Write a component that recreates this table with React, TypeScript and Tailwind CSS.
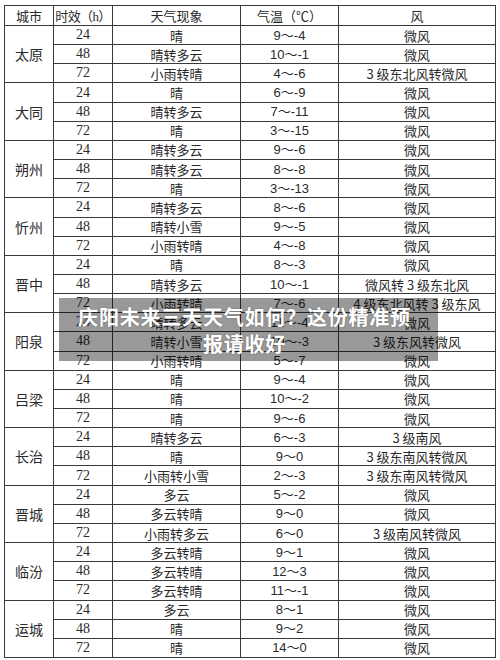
import React from 'react'

type Row = [string, string, string, string]
type City = { name: string; rows: Row[] }

const cities: City[] = [
  { name: '太原', rows: [['24', '晴', '9～-4', '微风'], ['48', '晴转多云', '10～-1', '微风'], ['72', '小雨转晴', '4～-6', '3 级东北风转微风']] },
  { name: '大同', rows: [['24', '晴', '6～-9', '微风'], ['48', '晴转多云', '7～-11', '微风'], ['72', '晴', '3～-15', '微风']] },
  { name: '朔州', rows: [['24', '晴转多云', '9～-6', '微风'], ['48', '晴转多云', '8～-8', '微风'], ['72', '晴', '3～-13', '微风']] },
  { name: '忻州', rows: [['24', '晴转多云', '8～-6', '微风'], ['48', '晴转小雪', '9～-5', '微风'], ['72', '小雨转晴', '4～-8', '微风']] },
  { name: '晋中', rows: [['24', '晴', '8～-3', '微风'], ['48', '晴转多云', '10～-1', '微风转 3 级东北风'], ['72', '小雨转晴', '7～-6', '4 级东北风转 3 级东风']] },
  { name: '阳泉', rows: [['24', '晴转多云', '11～-4', '微风'], ['48', '晴转小雪', '10～-3', '3 级东风转微风'], ['72', '小雨转晴', '5～-7', '微风']] },
  { name: '吕梁', rows: [['24', '晴', '9～-4', '微风'], ['48', '晴', '10～-2', '微风'], ['72', '晴', '9～-6', '微风']] },
  { name: '长治', rows: [['24', '晴转多云', '6～-3', '3 级南风'], ['48', '晴', '9～0', '3 级东南风转微风'], ['72', '小雨转小雪', '2～-3', '3 级东南风转微风']] },
  { name: '晋城', rows: [['24', '多云', '5～-2', '微风'], ['48', '多云转晴', '9～0', '微风'], ['72', '小雨转多云', '6～0', '3 级南风转微风']] },
  { name: '临汾', rows: [['24', '多云转晴', '9～1', '微风'], ['48', '多云转晴', '12～3', '微风'], ['72', '多云转晴', '11～-1', '微风']] },
  { name: '运城', rows: [['24', '多云', '8～1', '微风'], ['48', '晴', '9～2', '微风'], ['72', '晴', '14～0', '微风']] },
]

const cjk = "font-['Noto_Sans_CJK_SC',sans-serif]"
const serif = "font-['Liberation_Serif','Noto_Sans_CJK_SC',serif]"
const cell = 'bg-white flex items-center justify-center text-[13px] leading-none text-[#2a2a2a] whitespace-nowrap'

export default function App() {
  return (
    <div className="relative w-[500px] h-[660px] bg-white overflow-hidden">
      <div className="pt-[5px] pl-[4px]">
        <div className="w-[492px] h-[653px] bg-[#3a3a3a] p-px grid gap-px grid-cols-[48px_58px_127px_97px_156px] grid-rows-[19px_repeat(33,minmax(0,1fr))]">
          <div className={`${cell} ${cjk}`}>城市</div>
          <div className={`${cell} ${cjk} text-[12px] tracking-[-0.6px]`}>
            <span>时效（<span className={serif}>h</span>）</span>
          </div>
          <div className={`${cell} ${cjk}`}>天气现象</div>
          <div className={`${cell} ${cjk}`}>气温（℃）</div>
          <div className={`${cell} ${cjk}`}>风</div>
          {cities.map((c) => (
            <React.Fragment key={c.name}>
              <div className={`${cell} ${cjk} row-span-3 text-[14px]`}>{c.name}</div>
              {c.rows.map((r, i) => (
                <React.Fragment key={i}>
                  <div className={`${cell} ${serif} text-[14px]`}>{r[0]}</div>
                  <div className={`${cell} ${cjk}`}>{r[1]}</div>
                  <div className={`${cell} font-['Liberation_Sans','Noto_Sans_CJK_SC',sans-serif] text-[12px]`}>{r[2]}</div>
                  <div className={`${cell} ${cjk}`}>{r[3]}</div>
                </React.Fragment>
              ))}
            </React.Fragment>
          ))}
        </div>
      </div>
      <div className="absolute left-[59px] top-[298px] w-[379px] h-[63px] bg-black/40 flex items-center justify-center pl-[12px] pr-[20px]">
        <p className={`${cjk} text-white font-bold text-[20px] leading-[27px] tracking-[0.8px] text-center [text-shadow:0_0_2px_rgba(0,0,0,0.3)]`}>
          庆阳未来三天天气如何？这份精准预报请收好
        </p>
      </div>
    </div>
  )
}
